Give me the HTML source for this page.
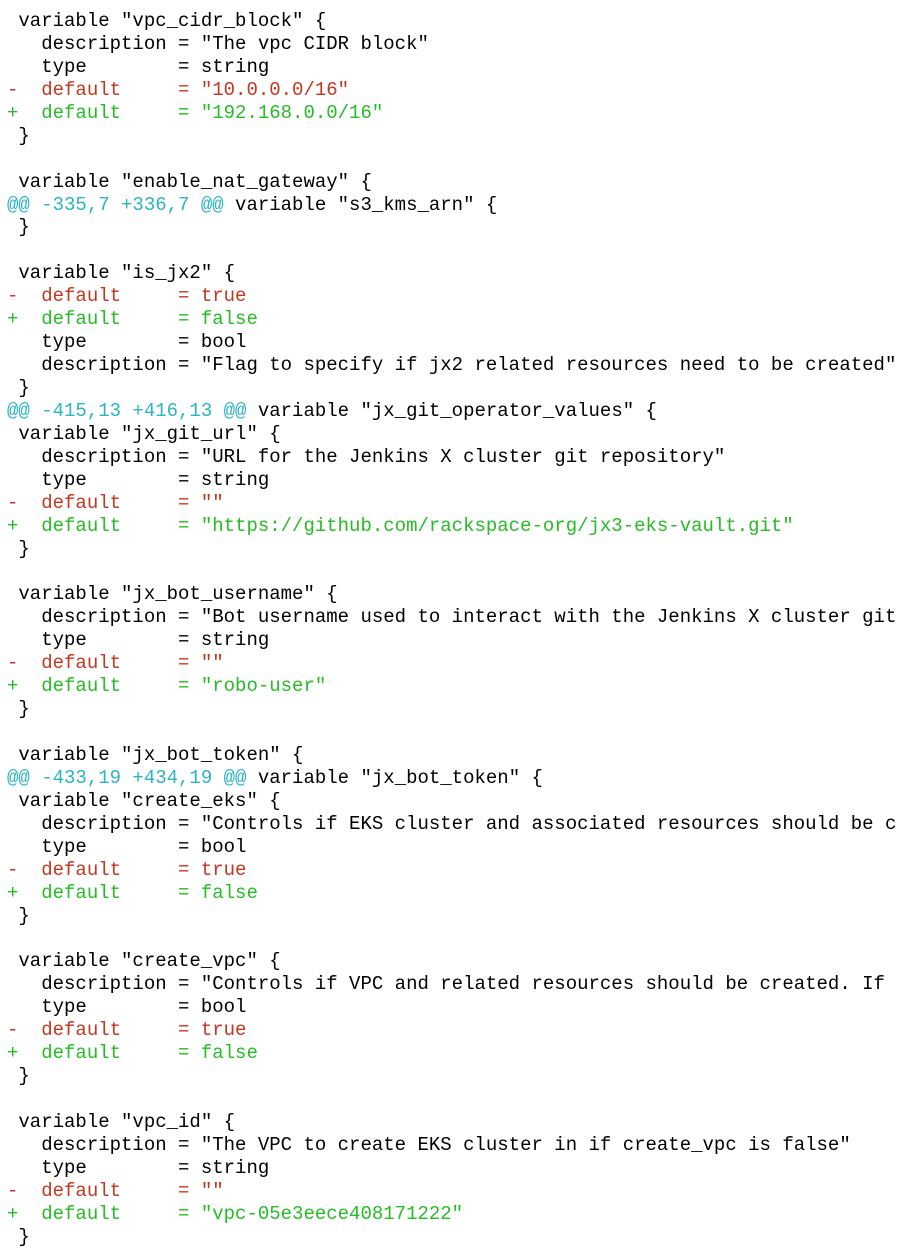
<!DOCTYPE html>
<html><head><meta charset="utf-8"><style>
html,body{margin:0;padding:0;background:#fff;width:903px;height:1253px;overflow:hidden}
pre{margin:0;position:absolute;left:7px;top:10px;font-family:"Liberation Mono","DejaVu Sans Mono",monospace;font-size:19px;line-height:22.93px;color:#000;white-space:pre}
.r{color:#c33720}.g{color:#25bc24}.c{color:#2bb4c4}
</style></head><body><pre> variable "vpc_cidr_block" {
   description = "The vpc CIDR block"
   type        = string
<span class="r">-  default     = "10.0.0.0/16"</span>
<span class="g">+  default     = "192.168.0.0/16"</span>
 }

 variable "enable_nat_gateway" {
<span class="c">@@ -335,7 +336,7 @@</span> variable "s3_kms_arn" {
 }

 variable "is_jx2" {
<span class="r">-  default     = true</span>
<span class="g">+  default     = false</span>
   type        = bool
   description = "Flag to specify if jx2 related resources need to be created"
 }
<span class="c">@@ -415,13 +416,13 @@</span> variable "jx_git_operator_values" {
 variable "jx_git_url" {
   description = "URL for the Jenkins X cluster git repository"
   type        = string
<span class="r">-  default     = ""</span>
<span class="g">+  default     = "https://github.com/rackspace-org/jx3-eks-vault.git"</span>
 }

 variable "jx_bot_username" {
   description = "Bot username used to interact with the Jenkins X cluster git
   type        = string
<span class="r">-  default     = ""</span>
<span class="g">+  default     = "robo-user"</span>
 }

 variable "jx_bot_token" {
<span class="c">@@ -433,19 +434,19 @@</span> variable "jx_bot_token" {
 variable "create_eks" {
   description = "Controls if EKS cluster and associated resources should be c
   type        = bool
<span class="r">-  default     = true</span>
<span class="g">+  default     = false</span>
 }

 variable "create_vpc" {
   description = "Controls if VPC and related resources should be created. If 
   type        = bool
<span class="r">-  default     = true</span>
<span class="g">+  default     = false</span>
 }

 variable "vpc_id" {
   description = "The VPC to create EKS cluster in if create_vpc is false"
   type        = string
<span class="r">-  default     = ""</span>
<span class="g">+  default     = "vpc-05e3eece408171222"</span>
 }</pre></body></html>
